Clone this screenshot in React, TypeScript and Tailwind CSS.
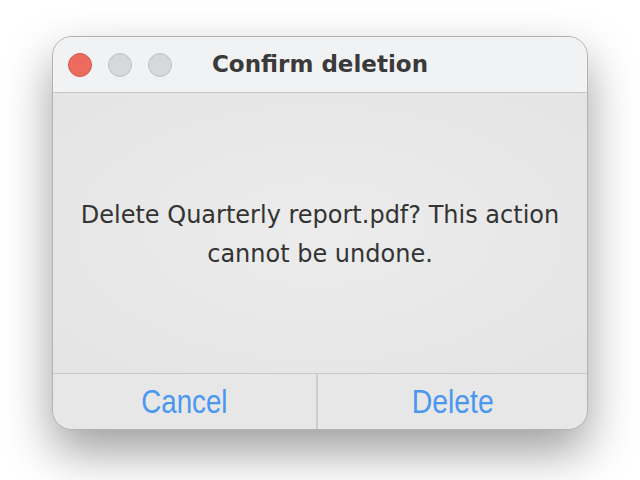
export default function App() {
  return (
    <div className="w-[640px] h-[480px] bg-white flex justify-center pt-[36px]">
      <div className="w-[536px] h-[394px] flex flex-col rounded-[20px] overflow-hidden border border-[#b2b2b2] shadow-[0_22px_48px_rgba(0,0,0,0.38)] bg-[#e6e6e6]">
        <div className="h-[56px] shrink-0 grid grid-cols-[1fr_auto_1fr] items-center bg-[#f1f2f4] border-b border-[#c6c6c6]">
          <div className="flex items-center gap-[16px] pl-[15px]">
            <span className="w-[24px] h-[24px] rounded-full bg-[#ed6a5e] border border-[#d85a4f]" />
            <span className="w-[24px] h-[24px] rounded-full bg-[#d7d8da] border border-[#c0c0c2]" />
            <span className="w-[24px] h-[24px] rounded-full bg-[#d7d8da] border border-[#c0c0c2]" />
          </div>
          <div className="text-[23px] font-bold text-[#3a3a3a] font-['DejaVu_Sans',sans-serif] leading-none">
            Confirm deletion
          </div>
          <div />
        </div>
        <div className="flex-1 flex items-center justify-center pt-[4px] bg-[radial-gradient(ellipse_at_center,#ececec_0%,#e4e4e4_100%)]">
          <p className="text-center text-[24px] leading-[39px] text-[#333333] font-['DejaVu_Sans',sans-serif]">
            Delete Quarterly report.pdf? This action
            <br />
            cannot be undone.
          </p>
        </div>
        <div className="h-[56px] shrink-0 grid grid-cols-[265px_1fr] border-t border-[#c8c8c8] bg-[#e7e7e7]">
          <button className="flex items-center justify-center border-r-2 border-[#cdcdcd] text-[#4a97f0] font-['Liberation_Sans',sans-serif] leading-none">
            <span className="inline-block text-[33px] scale-x-[0.84]">Cancel</span>
          </button>
          <button className="flex items-center justify-center text-[#4a97f0] font-['Liberation_Sans',sans-serif] leading-none">
            <span className="inline-block text-[33px] scale-x-[0.86]">Delete</span>
          </button>
        </div>
      </div>
    </div>
  );
}
